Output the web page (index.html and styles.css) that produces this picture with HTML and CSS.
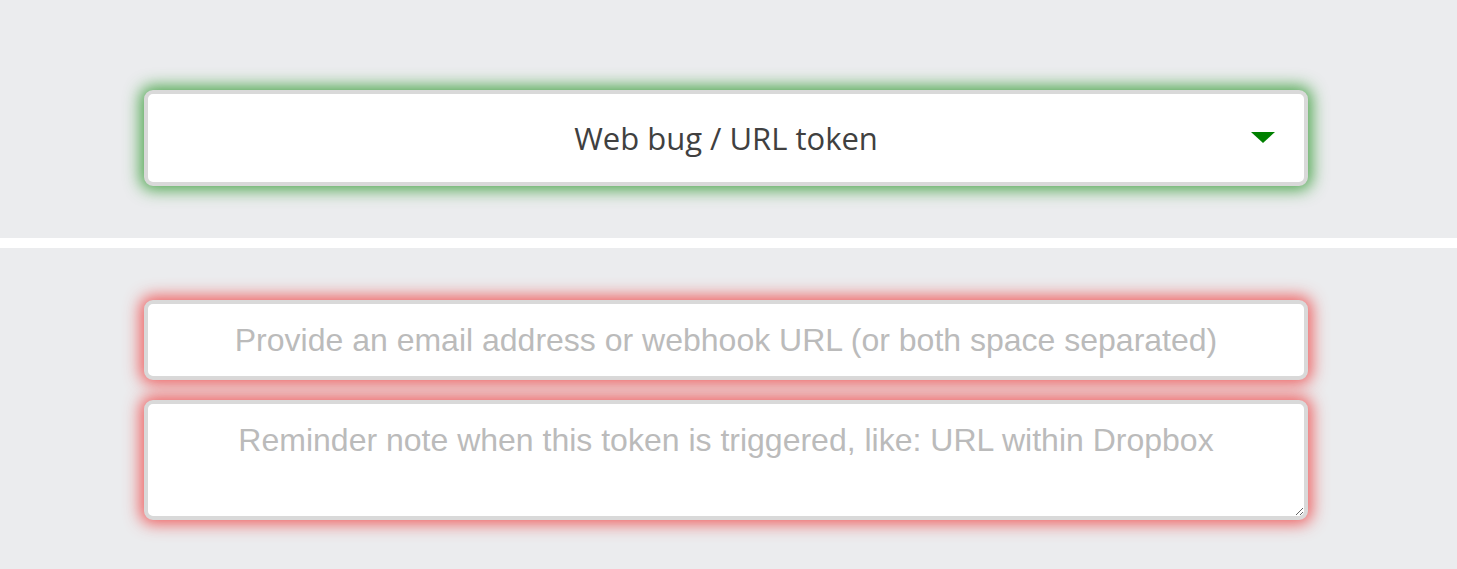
FILE: index.html
```html
<!DOCTYPE html>
<html lang="en">
<head>
    <meta charset="UTF-8">
    <meta name="viewport" content="width=device-width, initial-scale=1.0">
    <title>Create token</title>
    <link rel="stylesheet" href="styles.css">
</head>
<body>
    <div class="section top">
        <div class="select-wrap">
            <select class="token-select">
                <option>Web bug / URL token</option>
                <option>DNS token</option>
                <option>Word document</option>
            </select>
            <span class="select-arrow"></span>
        </div>
    </div>

    <div class="divider"></div>

    <div class="section bottom">
        <form class="token-form">
            <input type="text" class="field field-email" placeholder="Provide an email address or webhook URL (or both space separated)">
            <textarea class="field field-memo" placeholder="Reminder note when this token is triggered, like: URL within Dropbox"></textarea>
        </form>
    </div>
</body>
</html>
```

FILE: styles.css
```css
        body {
            margin: 0;
            padding: 0;
            background: #ebecee;
            font-family: "Liberation Sans", Arial, sans-serif;
        }
        .section {
            padding: 0 149px 0 144px;
        }
        .top {
            padding-top: 90px;
            padding-bottom: 52px;
        }
        .divider {
            height: 10px;
            background: #ffffff;
        }
        .bottom {
            padding-top: 52px;
            padding-bottom: 40px;
        }
        .select-wrap {
            position: relative;
        }
        .token-select {
            display: block;
            width: 100%;
            height: 96px;
            box-sizing: border-box;
            border: 4px solid #d9d9d9;
            border-radius: 9px;
            background: #ffffff;
            box-shadow: 0 0 16px 4px rgba(40, 150, 40, 0.8);
            appearance: none;
            -webkit-appearance: none;
            font-family: "Open Sans", sans-serif;
            font-size: 31px;
            color: #404040;
            text-align: center;
            text-align-last: center;
            outline: none;
        }
        .select-arrow {
            position: absolute;
            right: 33px;
            top: 42px;
            width: 0;
            height: 0;
            border-left: 12px solid transparent;
            border-right: 12px solid transparent;
            border-top: 11px solid #008000;
            pointer-events: none;
        }
        .token-form {
            display: flex;
            flex-direction: column;
            gap: 20px;
            margin: 0;
        }
        .field {
            display: block;
            width: 100%;
            box-sizing: border-box;
            border: 4px solid #d9d9d9;
            border-radius: 9px;
            background: #ffffff;
            box-shadow: 0 0 16px 4px rgba(240, 60, 60, 0.8);
            font-family: "Liberation Sans", Arial, sans-serif;
            font-size: 32px;
            color: #444444;
            text-align: center;
            outline: none;
            margin: 0;
        }
        .field::placeholder {
            color: #bbbbbb;
        }
        .field-email {
            height: 80px;
            padding: 0 20px;
        }
        .field-memo {
            height: 120px;
            padding: 18px 20px 0;
            resize: vertical;
        }
```
